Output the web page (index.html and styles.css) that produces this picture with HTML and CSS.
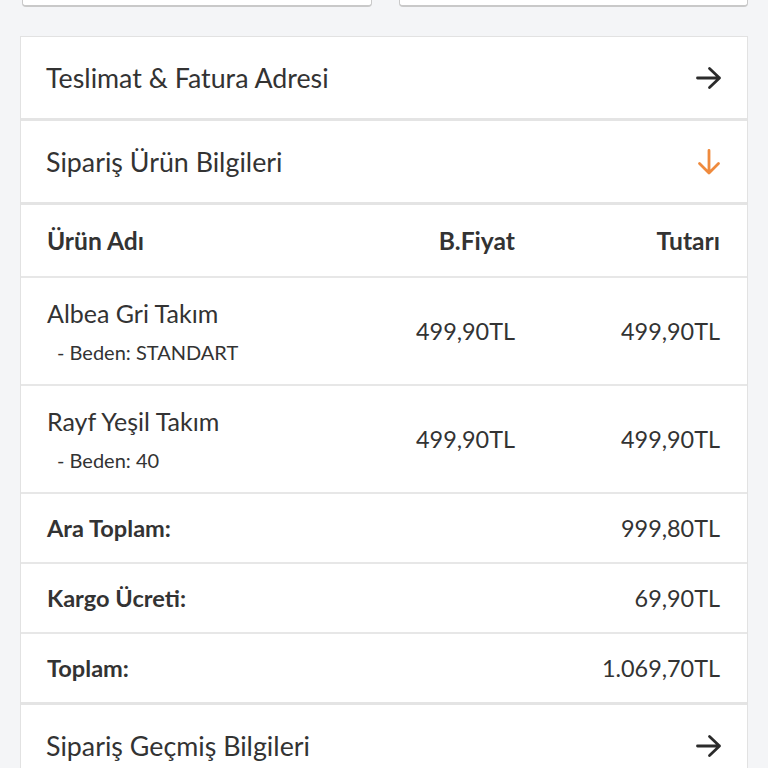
FILE: index.html
```html
<!DOCTYPE html>
<html lang="tr">
<head>
<meta charset="utf-8">
<link rel="stylesheet" href="styles.css">
</head>
<body>
<div class="page">
  <div class="top-boxes">
    <div class="top-box"></div>
    <div class="top-box"></div>
  </div>
  <div class="card">
    <div class="section">
      <span class="section-title">Teslimat &amp; Fatura Adresi</span>
      <svg class="icon" viewBox="0 0 26 26" width="26" height="26"><path d="M1.5 13 H23.5 M13.5 3.5 L23.5 13 L13.5 22.5" fill="none" stroke="#2b2b2b" stroke-width="2.8" stroke-linecap="round" stroke-linejoin="round"/></svg>
    </div>
    <div class="section">
      <span class="section-title">Sipariş Ürün Bilgileri</span>
      <svg class="icon" viewBox="0 0 26 26" width="26" height="26"><path d="M13 1.5 V24 M3.5 14.5 L13 24 L22.5 14.5" fill="none" stroke="#ef8a3d" stroke-width="2.8" stroke-linecap="round" stroke-linejoin="round"/></svg>
    </div>
    <div class="table">
      <div class="trow thead">
        <div class="c-name">Ürün Adı</div>
        <div class="c-price">B.Fiyat</div>
        <div class="c-total">Tutarı</div>
      </div>
      <div class="trow item">
        <div class="c-name">
          <div class="pname">Albea Gri Takım</div>
          <div class="pvar">- Beden: STANDART</div>
        </div>
        <div class="c-price">499,90TL</div>
        <div class="c-total">499,90TL</div>
      </div>
      <div class="trow item">
        <div class="c-name">
          <div class="pname">Rayf Yeşil Takım</div>
          <div class="pvar">- Beden: 40</div>
        </div>
        <div class="c-price">499,90TL</div>
        <div class="c-total">499,90TL</div>
      </div>
      <div class="trow sum">
        <div class="s-label">Ara Toplam:</div>
        <div class="s-val">999,80TL</div>
      </div>
      <div class="trow sum">
        <div class="s-label">Kargo Ücreti:</div>
        <div class="s-val">69,90TL</div>
      </div>
      <div class="trow sum last">
        <div class="s-label">Toplam:</div>
        <div class="s-val">1.069,70TL</div>
      </div>
    </div>
    <div class="section">
      <span class="section-title">Sipariş Geçmiş Bilgileri</span>
      <svg class="icon" viewBox="0 0 26 26" width="26" height="26"><path d="M1.5 13 H23.5 M13.5 3.5 L23.5 13 L13.5 22.5" fill="none" stroke="#2b2b2b" stroke-width="2.8" stroke-linecap="round" stroke-linejoin="round"/></svg>
    </div>
  </div>
</div>
</body>
</html>
```
FILE: styles.css
```css
html, body {
  margin: 0;
  padding: 0;
  background: #f4f5f7;
  font-family: Lato, "Noto Sans", sans-serif;
  color: #333;
}
.page {
  padding: 0 20px 0 20px;
}
.top-boxes {
  display: flex;
  gap: 27px;
  padding: 0 0 0 2px;
}
.top-box {
  flex: 1;
  height: 5px;
  background: #fff;
  border: 1px solid #c9c9c9;
  border-top: none;
  border-bottom-width: 2px;
  border-radius: 0 0 4px 4px;
}
.card {
  margin-top: 29px;
  background: #fff;
  border: 1px solid #e2e2e2;
  border-bottom: none;
}
.section {
  height: 81px;
  display: flex;
  align-items: center;
  justify-content: space-between;
  padding: 0 25px 0 25px;
  border-bottom: 3px solid #e4e4e4;
}
.section:last-child {
  border-bottom: none;
}
.section-title {
  font-size: 26.8px;
  color: #333;
}
.icon {
  display: block;
}
.trow {
  display: flex;
  align-items: center;
  padding: 0 27px 0 26px;
  border-bottom: 2px solid #e7e7e7;
  font-size: 23.4px;
}
.thead {
  height: 71px;
  font-weight: bold;
  font-size: 24.6px;
}
.item {
  height: 106px;
}
.c-name {
  flex: 1;
}
.c-price {
  width: 180px;
  text-align: right;
}
.c-total {
  width: 205px;
  text-align: right;
}
.pname {
  font-size: 25px;
  line-height: 30px;
}
.pvar {
  font-size: 20px;
  line-height: 24px;
  padding-left: 10px;
  margin-top: 12px;
}
.sum {
  height: 68px;
  justify-content: space-between;
}
.sum.last {
  border-bottom: 3px solid #e4e4e4;
}
.s-label {
  font-weight: bold;
  font-size: 23.6px;
}
```
